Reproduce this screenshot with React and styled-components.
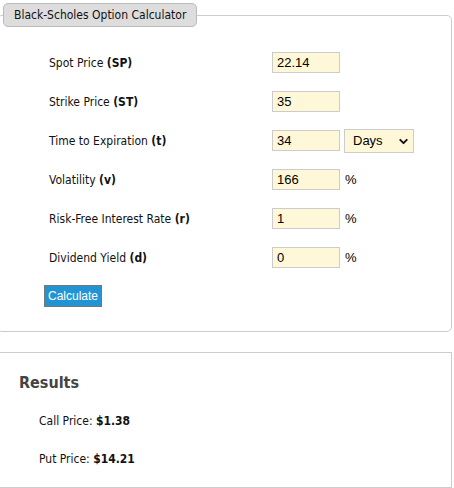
import React from 'react';
import styled, { createGlobalStyle } from 'styled-components';
import { ChevronDown } from 'lucide-react';

const GlobalStyles = createGlobalStyle`
  body {
    margin: 0;
    background: #fff;
    font-family: "DejaVu Sans Condensed", "DejaVu Sans", sans-serif;
    font-size: 12px;
    color: #000;
    overflow: hidden;
  }
`;

const fields = [
  { label: 'Spot Price', short: 'SP', value: '22.14' },
  { label: 'Strike Price', short: 'ST', value: '35' },
  { label: 'Time to Expiration', short: 't', value: '34', select: true },
  { label: 'Volatility', short: 'v', value: '166', unit: '%' },
  { label: 'Risk-Free Interest Rate', short: 'r', value: '1', unit: '%' },
  { label: 'Dividend Yield', short: 'd', value: '0', unit: '%' },
];

const App = () => {
  return (
    <>
      <GlobalStyles />
      <Page>
        <Fieldset>
          <Legend>Black-Scholes Option Calculator</Legend>
          <Form onSubmit={(e) => e.preventDefault()}>
            {fields.map((f) => (
              <Row key={f.short}>
                <Label>
                  {f.label} <b>({f.short})</b>
                </Label>
                <Input defaultValue={f.value} />
                {f.select && (
                  <SelectWrap>
                    <Select defaultValue="Days">
                      <option>Days</option>
                      <option>Years</option>
                    </Select>
                    <Chevron size={13} strokeWidth={3.5} />
                  </SelectWrap>
                )}
                {f.unit && <Unit>{f.unit}</Unit>}
              </Row>
            ))}
            <Button type="submit">Calculate</Button>
          </Form>
        </Fieldset>
        <Results>
          <Heading>Results</Heading>
          <ResultLine>
            Call Price: <b>$1.38</b>
          </ResultLine>
          <ResultLine>
            Put Price: <b>$14.21</b>
          </ResultLine>
        </Results>
      </Page>
    </>
  );
};

export default App;

const Page = styled.div`
  margin: 3px 0 0 -3px;
  width: 455px;
`;

const Fieldset = styled.fieldset`
  margin: 0;
  padding: 0 0 24px;
  border: 1px solid #ccc;
  border-radius: 5px;
  min-width: 0;
`;

const Legend = styled.legend`
  margin-left: 5px;
  padding: 0 10px;
  height: 24px;
  line-height: 22px;
  box-sizing: border-box;
  background: #ddd;
  border: 1px solid #bbb;
  border-radius: 5px;
  color: #111;
`;

const Form = styled.form`
  display: flex;
  flex-direction: column;
  align-items: flex-start;
  padding: 16px 0 0 46px;
`;

const Row = styled.div`
  display: flex;
  align-items: center;
  height: 39px;
`;

const Label = styled.span`
  width: 223px;
  padding-left: 5px;
  color: #111;
`;

const Input = styled.input`
  width: 68px;
  height: 21px;
  box-sizing: border-box;
  padding: 0 4px;
  background: #fff8d8;
  border: 1px solid #ccc;
  font-family: "Liberation Sans", Arial, sans-serif;
  font-size: 13px;
  color: #000;
  outline: none;
`;

const SelectWrap = styled.div`
  position: relative;
  margin-left: 4px;
`;

const Select = styled.select`
  appearance: none;
  width: 70px;
  height: 24px;
  box-sizing: border-box;
  padding: 0 0 0 8px;
  background: #fff8d8;
  border: 1px solid #ccc;
  font-family: "Liberation Sans", Arial, sans-serif;
  font-size: 13px;
  color: #000;
  outline: none;
`;

const Chevron = styled(ChevronDown)`
  position: absolute;
  right: 4px;
  top: 6px;
  color: #111;
  pointer-events: none;
`;

const Unit = styled.span`
  margin-left: 5px;
  font-family: "Liberation Sans", Arial, sans-serif;
  font-size: 13px;
`;

const Button = styled.button`
  margin-top: 8px;
  width: 58px;
  height: 22px;
  padding: 0;
  background: #2394d3;
  border: 1px solid #777;
  color: #fff;
  font-family: "Liberation Sans", Arial, sans-serif;
  font-size: 12px;
  cursor: pointer;
`;

const Results = styled.section`
  margin-top: 20px;
  height: 136px;
  box-sizing: border-box;
  border: 1px solid #ccc;
  padding: 20px 0 0 21px;
`;

const Heading = styled.h3`
  margin: 0 0 10px;
  font-size: 16px;
  font-weight: bold;
  color: #444;
`;

const ResultLine = styled.div`
  padding-left: 20px;
  height: 38px;
  line-height: 38px;
  color: #111;
`;
